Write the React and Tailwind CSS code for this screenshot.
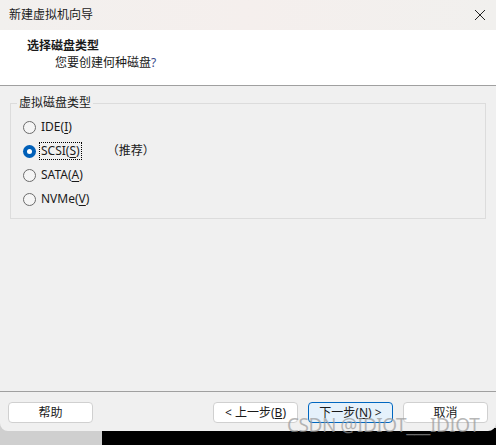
import React from 'react';

const font = { fontFamily: '"Noto Sans", "Noto Sans CJK SC", sans-serif' };

const Radio = ({ checked, label, hotkey, rest, extra }) => (
  <div className="flex items-center h-[24px]">
    <span
      className={`w-[13px] h-[13px] rounded-full flex items-center justify-center ${
        checked ? 'bg-[#005fb8]' : 'border border-[#6b6b6b] bg-[#f5f5f5]'
      }`}
    >
      {checked && <span className="w-[5px] h-[5px] rounded-full bg-white" />}
    </span>
    <span
      className={`ml-[4px] px-[1px] leading-[16px] ${checked ? 'outline outline-1 outline-dotted outline-black' : ''}`}
    >
      {label}(<u className="underline-offset-2">{hotkey}</u>){rest}
    </span>
    {extra && <span className="ml-[26px]">{extra}</span>}
  </div>
);

const Btn = ({ children, primary, className = '' }) => (
  <button
    className={`w-[85px] h-[21px] rounded-[4px] text-[12px] leading-none flex items-center justify-center ${
      primary ? 'bg-[#e5f1fb] border border-[#0067c0]' : 'bg-white border border-[#d0d0d0]'
    } ${className}`}
  >
    {children}
  </button>
);

export default function App() {
  return (
    <div className="w-[496px] h-[445px] relative overflow-hidden bg-[#cfcfcf] text-[#1a1a1a]" style={font}>
      <div className="absolute left-[102px] top-[428px] w-[400px] h-[20px] bg-black" />
      <div className="relative w-[496px] h-[431px] rounded-b-[8px] overflow-hidden bg-[#f0f0f0] flex flex-col">
        {/* title bar */}
        <div className="h-[30px] bg-gradient-to-r from-[#f2f0ee] via-[#f5efed] to-[#f1f0ee] flex items-center justify-between pl-[9px] pr-[8px]">
          <span className="text-[12px]">新建虚拟机向导</span>
          <svg width="12" height="12" viewBox="0 0 12 12" className="mr-[2px]">
            <path d="M1 1L11 11M11 1L1 11" stroke="#222" strokeWidth="1" />
          </svg>
        </div>
        {/* header */}
        <div className="h-[56px] bg-white border-b border-[#a0a0a0] pl-[27px] pt-[8px]">
          <div className="text-[12px] font-bold leading-[16px]">选择磁盘类型</div>
          <div className="text-[12px] leading-[16px] ml-[28px] mt-[1px]">
            您要创建何种磁盘<span className="text-[#3a4a8a]">?</span>
          </div>
        </div>
        {/* body */}
        <div className="flex-1 px-[10px] pt-[17px]">
          <div className="relative border border-[#dcdcdc] h-[116px] pl-[12px] pt-[11px] text-[12px]">
            <span className="absolute -top-[9px] left-[6px] px-[2px] bg-[#f0f0f0] leading-[16px]">虚拟磁盘类型</span>
            <Radio label="IDE" hotkey="I" />
            <Radio checked label="SCSI" hotkey="S" extra="（推荐）" />
            <Radio label="SATA" hotkey="A" />
            <Radio label="NVMe" hotkey="V" />
          </div>
        </div>
        {/* footer */}
        <div className="h-[40px] border-t border-[#a0a0a0] flex items-start pt-[10px] px-[8px]">
          <Btn>帮助</Btn>
          <div className="flex-1" />
          <Btn>&lt; 上一步(<u>B</u>)</Btn>
          <Btn primary className="ml-[10px]">下一步(<u>N</u>) &gt;</Btn>
          <Btn className="ml-[10px]">取消</Btn>
        </div>
      </div>
      <div className="absolute left-[287px] top-[413px] text-[19px] leading-[24px] text-[#9a9a9a] opacity-70 tracking-tight">
        CSDN @IDIOT___IDIOT
      </div>
    </div>
  );
}
